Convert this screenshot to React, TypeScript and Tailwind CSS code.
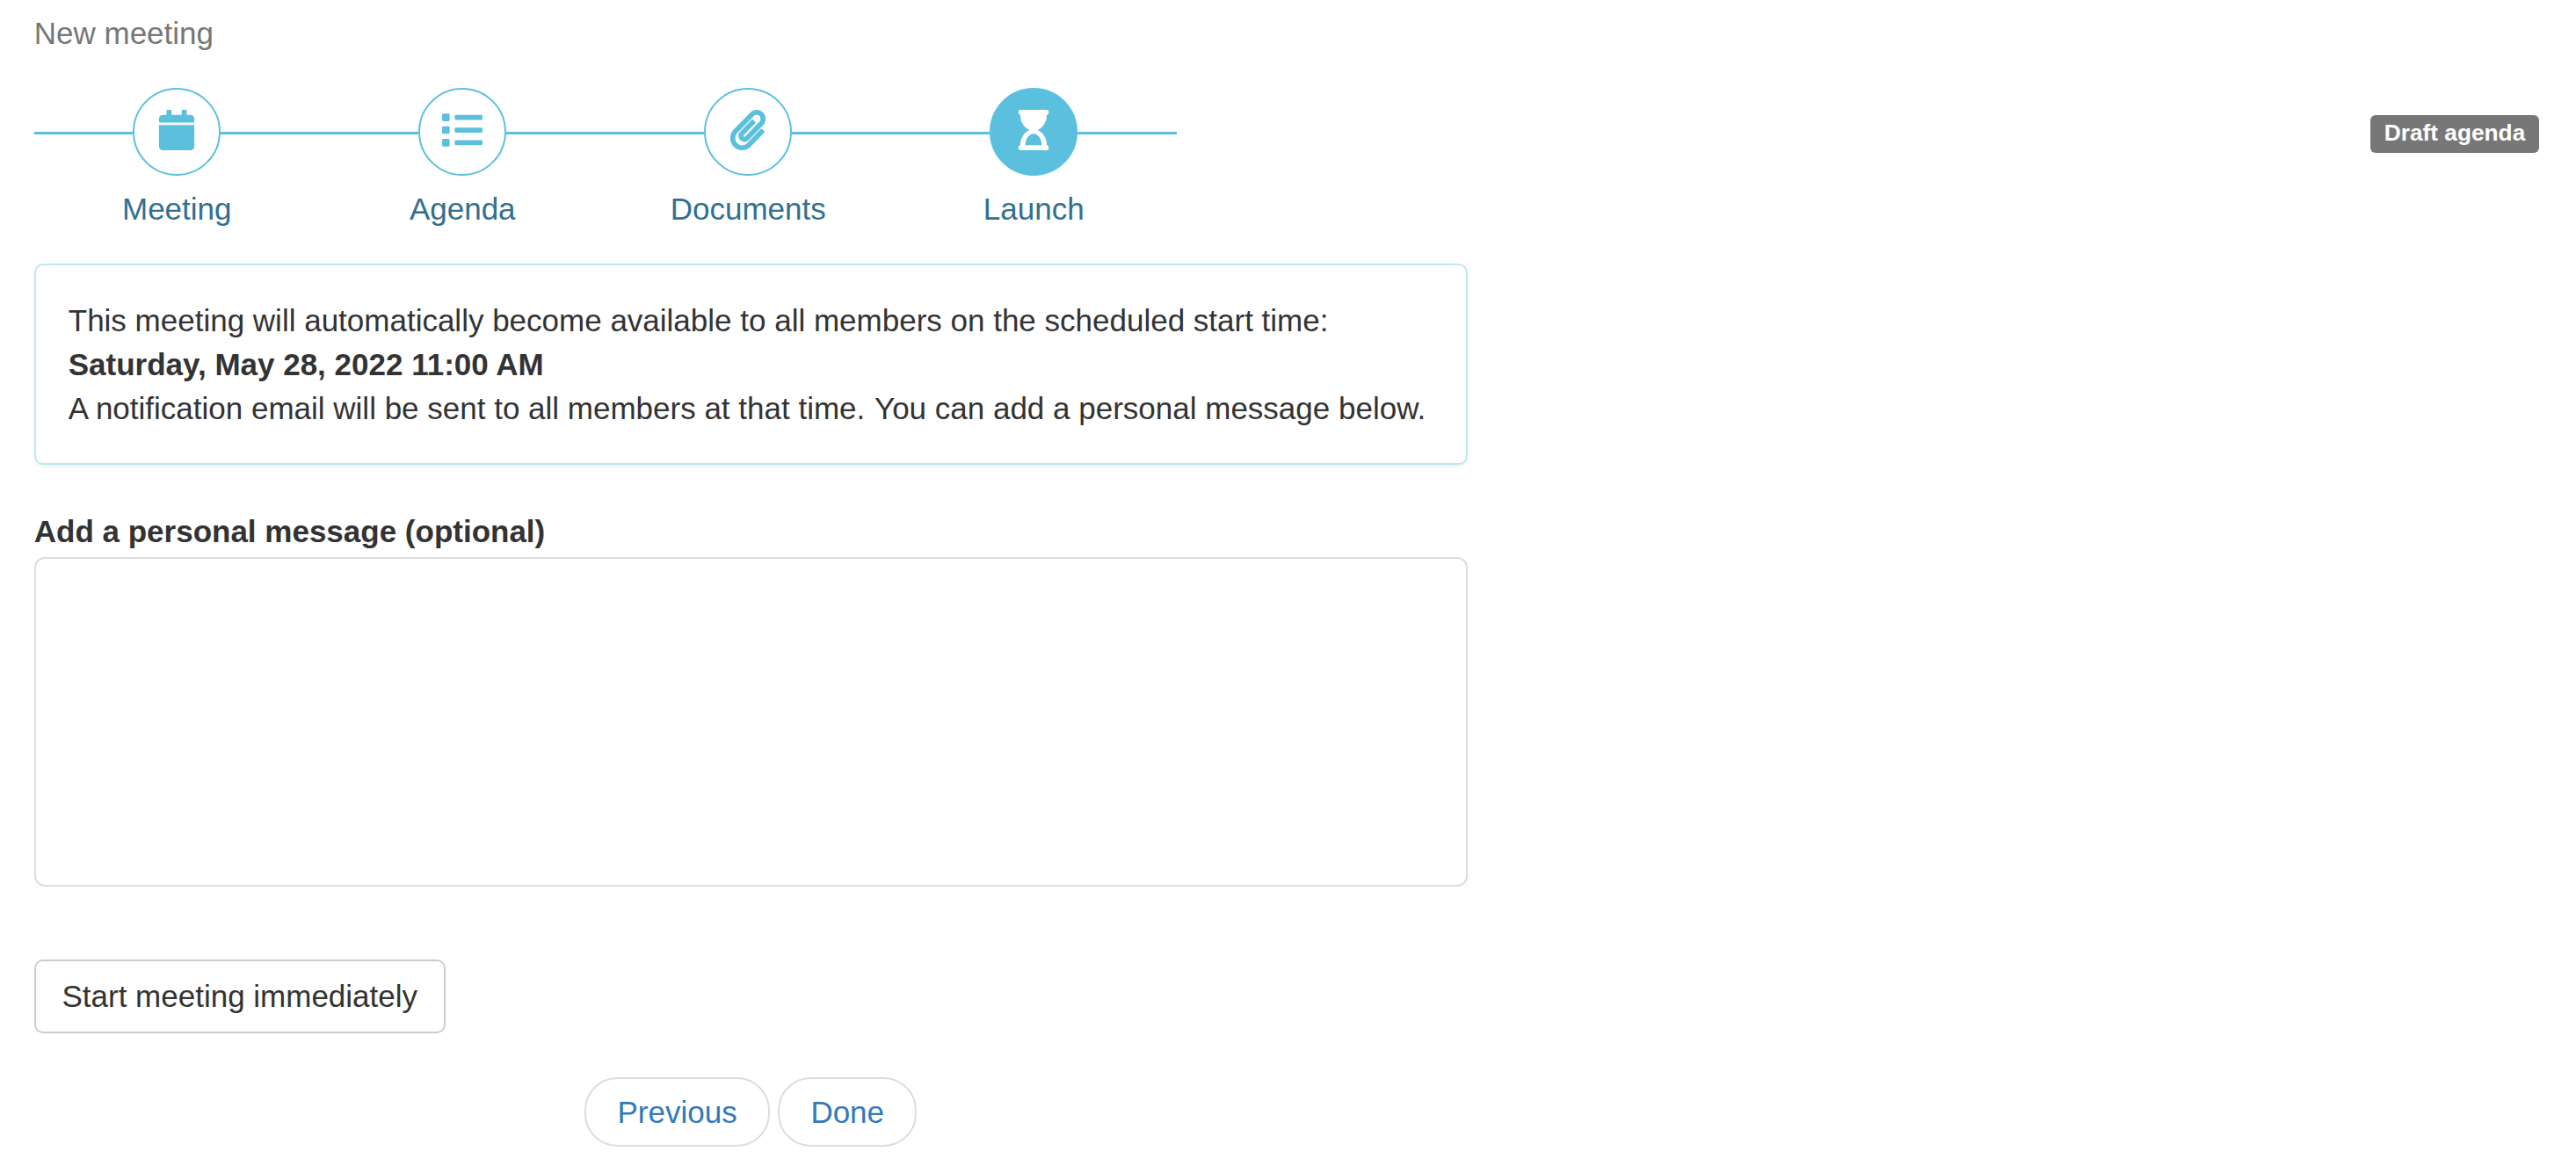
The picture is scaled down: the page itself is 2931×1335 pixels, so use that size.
import { useState } from "react";
import type { IconType } from "react-icons";
import { FaCalendar, FaHourglassStart, FaList, FaPaperclip } from "react-icons/fa";

interface Step {
  label: string;
  icon: IconType;
  active?: boolean;
}

const steps: Step[] = [
  { label: "Meeting", icon: FaCalendar },
  { label: "Agenda", icon: FaList },
  { label: "Documents", icon: FaPaperclip },
  { label: "Launch", icon: FaHourglassStart, active: true },
];

function StepItem({ label, icon: Icon, active }: Step) {
  return (
    <li className="flex w-[325px] flex-col items-center">
      <div className="flex w-full items-center">
        <div className="mt-[3px] h-[3px] flex-1 bg-[#5bc0de]" />
        <a
          href="#"
          className={`flex h-[100px] w-[100px] justify-center rounded-full border-2 border-[#5bc0de] pt-[23px] ${
            active ? "bg-[#5bc0de] text-white" : "bg-white text-[#5bc0de]"
          }`}
        >
          <Icon className="h-[46px] w-[46px]" />
        </a>
        <div className="mt-[3px] h-[3px] flex-1 bg-[#5bc0de]" />
      </div>
      <a href="#" className="mt-[13px] text-[#31708f]">
        {label}
      </a>
    </li>
  );
}

export default function App() {
  const [message, setMessage] = useState("");

  return (
    <div className="min-h-screen bg-white pt-[13px] pr-[42px] pl-[38.75px] font-['Liberation_Sans',Arial,sans-serif] text-[35px] leading-[50px] text-[#333]">
      <h1 className="text-[#777]">New meeting</h1>

      <div className="mt-[37px] flex items-start justify-between">
        <ul className="flex">
          {steps.map((step) => (
            <StepItem key={step.label} {...step} />
          ))}
        </ul>
        <span className="mt-[31px] h-[43px] rounded-[6px] bg-[#777] px-[15.75px] pt-[5px] text-[26.25px] leading-[30px] font-bold whitespace-nowrap text-white">
          Draft agenda
        </span>
      </div>

      <main className="mt-[37px] w-[1631px]">
        <div className="rounded-[10px] border-2 border-[#bce8f1] px-[37px] pt-[38px] pb-[37px] whitespace-nowrap shadow-[0_2.5px_2.5px_rgba(0,0,0,0.05)]">
          <p>
            This meeting will automatically become available to all members on the scheduled start time:
          </p>
          <p className="font-bold">Saturday, May 28, 2022 11:00 AM</p>
          <p>
            A notification email will be sent to all members at that time.{" "}
            <span className="ml-px">You can add a personal message below.</span>
          </p>
        </div>

        <label htmlFor="message" className="mt-[51px] block font-bold">
          Add a personal message (optional)
        </label>
        <textarea
          id="message"
          value={message}
          onChange={(e) => setMessage(e.target.value)}
          className="mt-[4px] block h-[375px] w-full resize-none rounded-[12px] border-2 border-[#ddd] px-[30px] py-[15px] outline-none"
        />

        <button
          type="button"
          className="mt-[83px] block h-[84px] w-[468px] rounded-[10px] border-2 border-[#ccc] bg-white whitespace-nowrap"
        >
          Start meeting immediately
        </button>

        <div className="mt-[50px] flex justify-center gap-[9.75px] text-[#337ab7]">
          <button type="button" className="h-[79px] rounded-[37.5px] border-2 border-[#ddd] bg-white px-[35px]">
            Previous
          </button>
          <button type="button" className="h-[79px] rounded-[37.5px] border-2 border-[#ddd] bg-white px-[35px]">
            Done
          </button>
        </div>
      </main>
    </div>
  );
}
